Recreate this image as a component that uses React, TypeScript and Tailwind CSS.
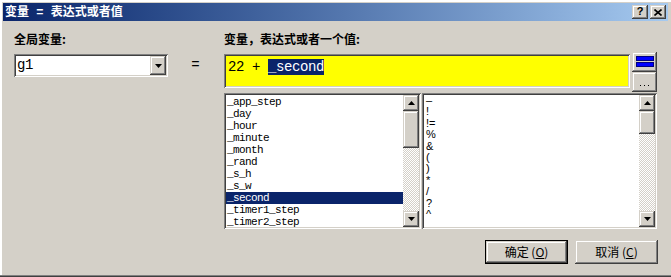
import React from "react";

const raised =
  "bg-[#d4d0c8] shadow-[inset_-1px_-1px_#404040,inset_1px_1px_#d4d0c8,inset_-2px_-2px_#808080,inset_2px_2px_#ffffff]";
const sunken =
  "shadow-[inset_1px_1px_#808080,inset_-1px_-1px_#ffffff,inset_2px_2px_#404040,inset_-2px_-2px_#d4d0c8]";
const dither =
  "bg-[image:repeating-conic-gradient(#ffffff_0_25%,#d4d0c8_0_50%)] bg-[length:2px_2px]";

const cjk = "font-['Noto_Sans_CJK_SC',sans-serif]";
const mono = "font-['Liberation_Mono','Noto_Sans_CJK_SC',monospace]";

function Arrow({ up }: { up?: boolean }) {
  return (
    <svg width="7" height="4" viewBox="0 0 7 4" className="block">
      {up ? (
        <path d="M3.5 0 L7 4 L0 4 Z" fill="#000" />
      ) : (
        <path d="M0 0 L7 0 L3.5 4 Z" fill="#000" />
      )}
    </svg>
  );
}

function ScrollBar({ thumb }: { thumb: number }) {
  return (
    <div className="flex w-[16px] shrink-0 flex-col">
      <div className={`${raised} flex h-[16px] items-center justify-center`}>
        <Arrow up />
      </div>
      <div className={raised} style={{ height: thumb }} />
      <div className={`${dither} flex-1`} />
      <div className={`${raised} flex h-[16px] items-center justify-center`}>
        <Arrow />
      </div>
    </div>
  );
}

const vars = [
  "_app_step",
  "_day",
  "_hour",
  "_minute",
  "_month",
  "_rand",
  "_s_h",
  "_s_w",
  "_second",
  "_timer1_step",
  "_timer2_step",
];

const ops = ["–", "!", "!=", "%", "&", "(", ")", "*", "/", "?", "^", "."];

export default function App() {
  return (
    <div
      className={`${cjk} relative h-[277px] w-[671px] overflow-hidden bg-[#d4d0c8] text-[12px] text-black shadow-[inset_0_-1px_#404040,inset_0_-2px_#808080,inset_2px_0_#ffffff,inset_0_2px_#ffffff]`}
    >
      {/* title bar */}
      <div className="mx-[3px] mt-[3px] flex h-[18px] items-center justify-between bg-gradient-to-r from-[#0a246a] to-[#a6caf0] pl-[2px] pr-[2px]">
        <span className="whitespace-pre text-[12px] font-bold leading-[12px] text-white">
          变量<span className={`${mono} text-[12px]`}> = </span>表达式或者值
        </span>
        <div className="flex gap-[2px]">
          <div className={`${raised} flex h-[14px] w-[16px] items-center justify-center pb-[1px] font-['Liberation_Sans',sans-serif] text-[11px] font-bold leading-none`}>
            ?
          </div>
          <div className={`${raised} flex h-[14px] w-[16px] items-center justify-center`}>
            <svg width="8" height="7" viewBox="0 0 8 7">
              <path d="M0.5 0.5 L7.5 6.5 M7.5 0.5 L0.5 6.5" stroke="#000" strokeWidth="1.6" />
            </svg>
          </div>
        </div>
      </div>

      <div className="flex pl-[14px]">
        {/* left column */}
        <div className="flex w-[154px] flex-col">
          <div className="mt-[11px] h-[13px] font-bold leading-[13px]">全局变量:</div>
          <div className={`${sunken} mt-[9px] flex h-[23px] items-stretch bg-white p-[2px]`}>
            <div className={`${mono} flex-1 pl-[1px] text-[14px] leading-[19px] tracking-[-0.4px]`}>g1</div>
            <div className={`${raised} flex w-[16px] items-center justify-center`}>
              <Arrow />
            </div>
          </div>
        </div>

        {/* equals */}
        <div className="flex w-[56px] justify-center pt-[36px] pr-[1px]">
          <span className={`${mono} text-[14px] leading-[16px]`}>=</span>
        </div>

        {/* right column */}
        <div className="flex w-[434px] flex-col">
          <div className="mt-[11px] h-[13px] font-bold leading-[13px]">变量，表达式或者一个值:</div>
          <div className="mt-[7px] flex">
            <div className={`${sunken} mt-[2px] h-[34px] w-[406px] bg-[#ffff00] px-[4px] pt-[3px]`}>
              <span className={`${mono} whitespace-pre text-[14px] leading-[16px] tracking-[-0.4px]`}>
                22 + <span className="bg-[#0a246a] text-white">_second</span>
              </span>
            </div>
            <div className="ml-[2px] flex flex-col">
              <div className={`${raised} flex h-[20px] w-[25px] items-center justify-center pb-[1px]`}>
                <svg width="18" height="11" viewBox="0 0 18 11">
                  <rect x="0.5" y="0.5" width="17" height="4" fill="#0000ff" stroke="#000080" />
                  <rect x="0.5" y="6.5" width="17" height="4" fill="#0000ff" stroke="#000080" />
                </svg>
              </div>
              <div className={`${raised} flex h-[20px] w-[25px] items-end justify-center gap-[3px] pb-[6px]`}>
                <span className="h-[1px] w-[1px] bg-black" />
                <span className="h-[1px] w-[1px] bg-black" />
                <span className="h-[1px] w-[1px] bg-black" />
              </div>
            </div>
          </div>

          <div className="mt-[1px] flex gap-[1px]">
            <div className={`${sunken} flex h-[136px] w-[197px] bg-white p-[2px]`}>
              <div className={`${mono} flex-1 overflow-hidden pt-[1px] text-[11px] tracking-[-0.6px]`}>
                {vars.map((v) => (
                  <div
                    key={v}
                    className={`h-[12px] pl-[1px] leading-[12px] ${v === "_second" ? "bg-[#0a246a] text-white" : ""}`}
                  >
                    {v}
                  </div>
                ))}
              </div>
              <ScrollBar thumb={37} />
            </div>
            <div className={`${sunken} flex h-[136px] w-[235px] bg-white p-[2px]`}>
              <div className="flex-1 overflow-hidden pl-[2px] font-['Liberation_Sans',sans-serif] text-[11px]">
                {ops.map((o) => (
                  <div key={o} className="h-[11.4px] leading-[11.4px]">
                    {o}
                  </div>
                ))}
              </div>
              <ScrollBar thumb={23} />
            </div>
          </div>

          <div className="mt-[11px] flex justify-end gap-[7px]">
            <div className="h-[24px] w-[83px] border border-black">
              <div className={`${raised} flex h-full items-center justify-center`}>
                确定 (<span className="underline">O</span>)
              </div>
            </div>
            <div className={`${raised} flex h-[24px] w-[83px] items-center justify-center`}>
              取消 (<span className="underline">C</span>)
            </div>
          </div>
        </div>
      </div>
    </div>
  );
}
